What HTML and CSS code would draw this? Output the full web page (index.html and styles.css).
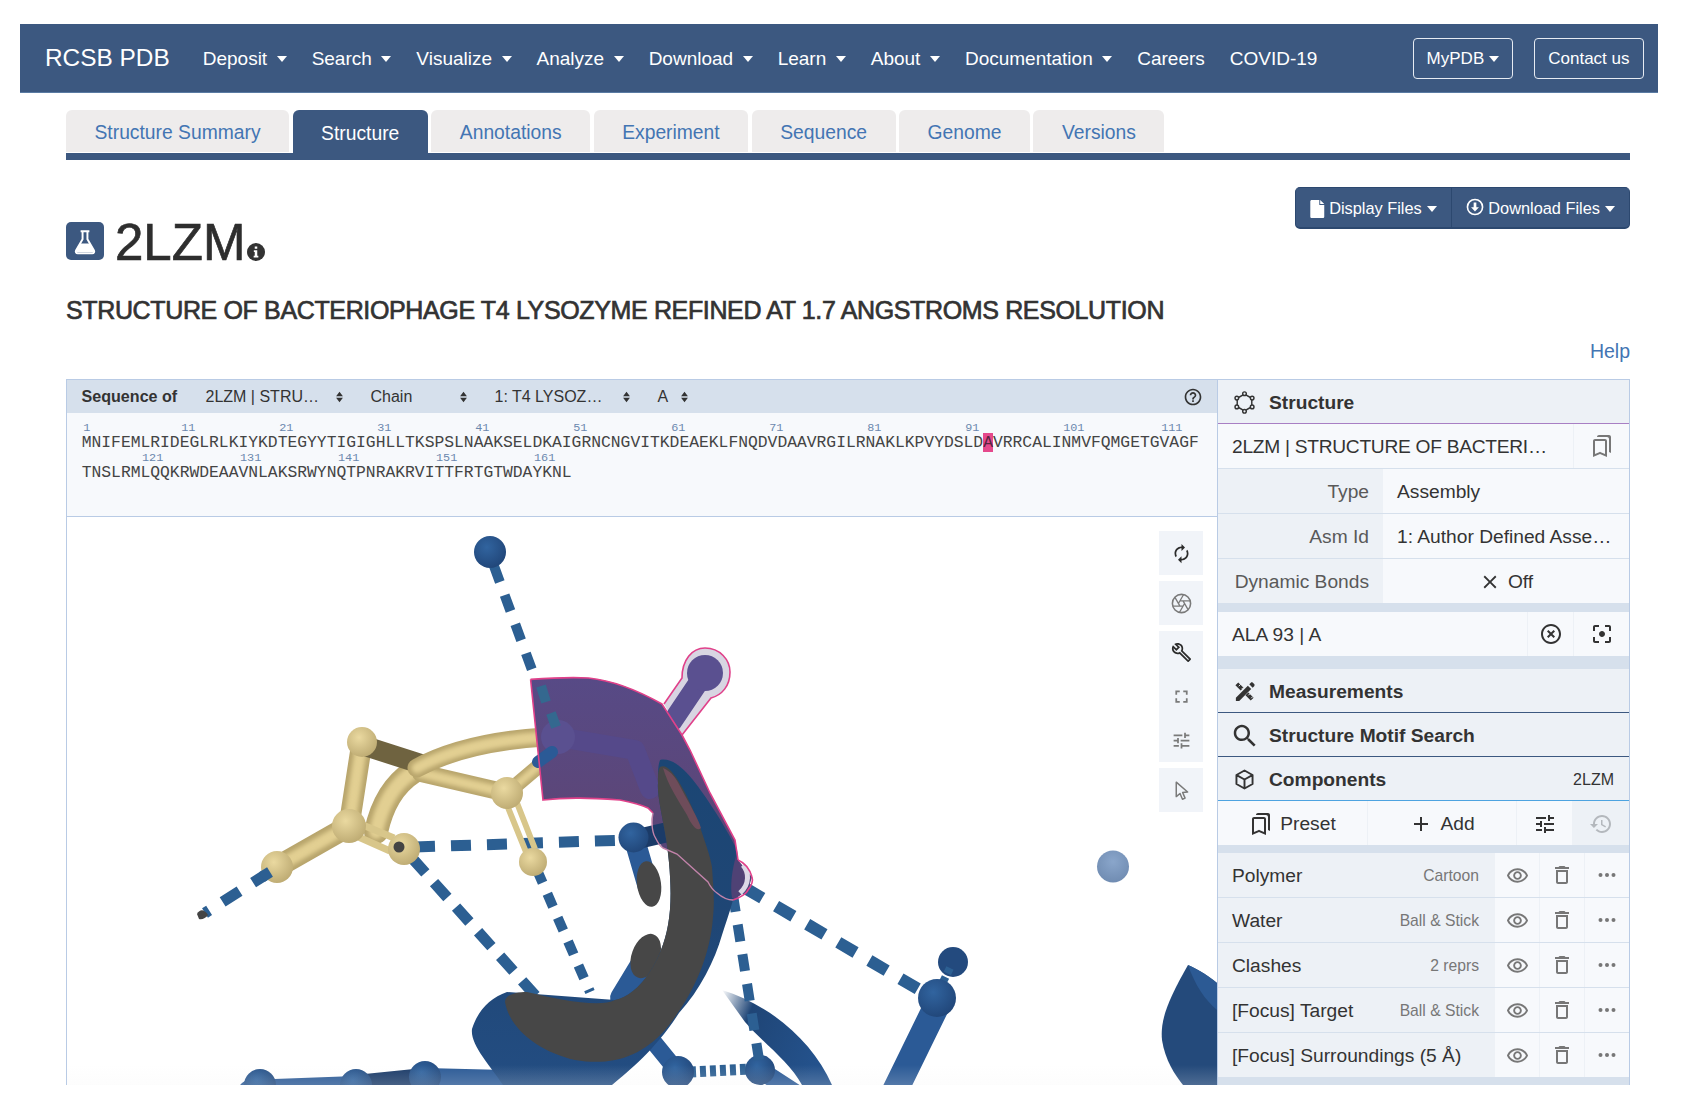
FILE: index.html
```html
<!DOCTYPE html>
<html lang="en">
<head>
<meta charset="utf-8">
<title>RCSB PDB - 2LZM: Structure</title>
<link rel="stylesheet" href="styles.css">
</head>
<body>
<svg class="sprite" aria-hidden="true">
  <symbol id="i-search" viewBox="0 0 24 24"><path d="M15.5 14h-.79l-.28-.27C15.41 12.59 16 11.11 16 9.5 16 5.91 13.09 3 9.5 3S3 5.91 3 9.5 5.91 16 9.5 16c1.61 0 3.09-.59 4.23-1.57l.27.28v.79l5 4.99L20.49 19l-4.99-5zm-6 0C7.01 14 5 11.99 5 9.5S7.01 5 9.5 5 14 7.01 14 9.5 11.99 14 9.5 14z"/></symbol>
  <symbol id="i-renew" viewBox="0 0 24 24"><path d="M12 6v3l4-4-4-4v3c-4.42 0-8 3.58-8 8 0 1.57.46 3.03 1.24 4.26L6.7 14.8c-.45-.83-.7-1.79-.7-2.8 0-3.31 2.69-6 6-6zm6.76 1.74L17.3 9.2c.44.84.7 1.79.7 2.8 0 3.31-2.69 6-6 6v-3l-4 4 4 4v-3c4.42 0 8-3.58 8-8 0-1.57-.46-3.03-1.24-4.26z"/></symbol>
  <symbol id="i-tune" viewBox="0 0 24 24"><path d="M3 17v2h6v-2H3zM3 5v2h10V5H3zm10 16v-2h8v-2h-8v-2h-2v6h2zM7 9v2H3v2h4v2h2V9H7zm14 4v-2H11v2h10zm-6-4h2V7h4V5h-4V3h-2v6z"/></symbol>
  <symbol id="i-eye" viewBox="0 0 24 24"><path d="M12 6.5c3.79 0 7.17 2.13 8.82 5.5-1.65 3.37-5.02 5.5-8.82 5.5S4.83 15.37 3.18 12C4.83 8.63 8.21 6.5 12 6.5m0-2C7 4.5 2.73 7.61 1 12c1.73 4.39 6 7.5 11 7.5s9.27-3.11 11-7.5c-1.73-4.39-6-7.5-11-7.5zm0 5c1.38 0 2.5 1.12 2.5 2.5s-1.12 2.5-2.5 2.5-2.5-1.12-2.5-2.5 1.12-2.5 2.5-2.5m0-2c-2.48 0-4.5 2.02-4.5 4.5s2.02 4.5 4.5 4.5 4.5-2.02 4.5-4.5-2.02-4.5-4.5-4.5z"/></symbol>
  <symbol id="i-trash" viewBox="0 0 24 24"><path d="M6 19c0 1.1.9 2 2 2h8c1.1 0 2-.9 2-2V7H6v12zM8 9h8v10H8V9zm7.5-5l-1-1h-5l-1 1H5v2h14V4z"/></symbol>
  <symbol id="i-more" viewBox="0 0 24 24"><circle cx="5.5" cy="12" r="2"/><circle cx="12" cy="12" r="2"/><circle cx="18.5" cy="12" r="2"/></symbol>
  <symbol id="i-history" viewBox="0 0 24 24"><path d="M13 3c-4.97 0-9 4.03-9 9H1l3.89 3.89.07.14L9 12H6c0-3.87 3.13-7 7-7s7 3.13 7 7-3.13 7-7 7c-1.93 0-3.68-.79-4.94-2.06l-1.42 1.42C8.27 19.99 10.51 21 13 21c4.97 0 9-4.03 9-9s-4.03-9-9-9zm-1 5v5l4.28 2.54.72-1.21-3.5-2.08V8H12z"/></symbol>
  <symbol id="i-help" viewBox="0 0 24 24"><path d="M11 18h2v-2h-2v2zm1-16C6.48 2 2 6.48 2 12s4.48 10 10 10 10-4.48 10-10S17.52 2 12 2zm0 18c-4.41 0-8-3.59-8-8s3.59-8 8-8 8 3.59 8 8-3.59 8-8 8zm0-14c-2.21 0-4 1.79-4 4h2c0-1.1.9-2 2-2s2 .9 2 2c0 2-3 1.75-3 5h2c0-2.25 3-2.5 3-5 0-2.21-1.79-4-4-4z"/></symbol>
  <symbol id="i-xcircle" viewBox="0 0 24 24"><path d="M14.59 8L12 10.59 9.41 8 8 9.41 10.59 12 8 14.59 9.41 16 12 13.41 14.59 16 16 14.59 13.41 12 16 9.41 14.59 8zM12 2C6.47 2 2 6.47 2 12s4.47 10 10 10 10-4.47 10-10S17.53 2 12 2zm0 18c-4.41 0-8-3.59-8-8s3.59-8 8-8 8 3.59 8 8-3.59 8-8 8z"/></symbol>
  <symbol id="i-focus" viewBox="0 0 24 24"><path d="M5 15H3v4c0 1.1.9 2 2 2h4v-2H5v-4zM5 5h4V3H5c-1.1 0-2 .9-2 2v4h2V5zm14-2h-4v2h4v4h2V5c0-1.1-.9-2-2-2zm0 16h-4v2h4c1.1 0 2-.9 2-2v-4h-2v4zM12 9c-1.66 0-3 1.34-3 3s1.34 3 3 3 3-1.34 3-3-1.34-3-3-3z"/></symbol>
  <symbol id="i-close" viewBox="0 0 24 24"><path d="M19 6.41L17.59 5 12 10.59 6.41 5 5 6.41 10.59 12 5 17.59 6.41 19 12 13.41 17.59 19 19 17.59 13.41 12z"/></symbol>
  <symbol id="i-add" viewBox="0 0 24 24"><path d="M19 13h-6v6h-2v-6H5v-2h6V5h2v6h6v2z"/></symbol>
  <symbol id="i-bookmarks" viewBox="0 0 24 24"><path d="M15 7v12.97l-4.21-1.81-.79-.34-.79.34L5 19.97V7h10m4-6H8.99C7.89 1 7 1.9 7 3h10c1.1 0 2 .9 2 2v13l2 1V3c0-1.1-.9-2-2-2zm-4 4H5c-1.1 0-2 .9-2 2v16l7-3 7 3V7c0-1.1-.9-2-2-2z"/></symbol>
  <symbol id="i-wrench" viewBox="0 0 24 24"><path d="M22.61 18.99l-9.08-9.08c.93-2.34.45-5.1-1.44-7C9.79.61 6.21.4 3.66 2.25L7.5 6.1 6.08 7.51 2.25 3.69C.4 6.23.61 9.82 2.91 12.11c1.86 1.86 4.57 2.35 6.89 1.48l9.11 9.11c.39.39 1.02.39 1.41 0l2.3-2.3c.4-.38.4-1.01-.01-1.41zm-3 1.6l-9.46-9.46c-.61.45-1.29.72-2 .82-1.36.2-2.79-.21-3.83-1.25C3.37 9.76 2.93 8.5 3 7.26l3.09 3.09 4.24-4.24-3.09-3.09c1.24-.07 2.49.37 3.44 1.31 1.08 1.08 1.49 2.57 1.24 3.96-.12.71-.42 1.37-.88 1.96l9.45 9.45-.88.88z"/></symbol>
  <symbol id="i-full" viewBox="0 0 24 24"><path d="M7 14H5v5h5v-2H7v-3zm-2-4h2V7h3V5H5v5zm12 7h-3v2h5v-5h-2v3zM14 5v2h3v3h2V5h-5z"/></symbol>
  <symbol id="i-shutter" viewBox="0 0 24 24"><g fill="none" stroke="currentColor"><circle cx="12" cy="12" r="10.4" stroke-width="1.8"/><path stroke-width="1.5" d="M15.5 12 9.75 21.96M13.75 15.03H2.25M10.25 15.03 4.5 5.07M8.5 12 14.25 2.04M10.25 8.97H21.75M13.75 8.97 19.5 18.93"/></g></symbol>
  <symbol id="i-cursor" viewBox="0 0 24 24"><path d="M6 2.5v16.5l4.3-3.6 2.8 6.6 3-1.3-2.8-6.5 5.7-.5z" fill="none" stroke="currentColor" stroke-width="1.7" stroke-linejoin="round"/></symbol>
  <symbol id="i-wand" viewBox="0 0 24 24"><path d="M2.5 5.5 5.5 2.5 11 8 8 11zM13 16 16 13 21.5 18.5 18.5 21.5z"/><path d="M6 6.5 8 4.5M9 9.5 10.5 8M16 16l1.5-1.5M19 19l1.5-1.5" stroke="#edf1f6" stroke-width="1"/><path d="M3 18.5 15.5 6 19 9.5 6.5 22H3zM17 4.5l1.6-1.6c.6-.6 1.5-.6 2.1 0l1.4 1.4c.6.6.6 1.5 0 2.1L20.5 8z"/></symbol>
  <symbol id="i-cube" viewBox="0 0 24 24"><path d="M12 2.6l8.4 4.7v9.4L12 21.4l-8.4-4.7V7.3zM3.8 7.4 12 12l8.2-4.6M12 12v9.2" fill="none" stroke="currentColor" stroke-width="2" stroke-linejoin="round"/></symbol>
  <symbol id="i-ring" viewBox="0 0 24 24"><g fill="none" stroke="currentColor" stroke-width="1.5"><path d="M12 3.2 19.6 7.6v8.8L12 20.8 4.4 16.4V7.6z"/><circle cx="12" cy="2.8" r="1.9" fill="#edf1f6"/><circle cx="20" cy="7.4" r="1.9" fill="#edf1f6"/><circle cx="20" cy="16.6" r="1.9" fill="#edf1f6"/><circle cx="12" cy="21.2" r="1.9" fill="#edf1f6"/><circle cx="4" cy="16.6" r="1.9" fill="#edf1f6"/><circle cx="4" cy="7.4" r="1.9" fill="#edf1f6"/></g></symbol>
  <symbol id="i-updown" viewBox="0 0 10 14"><path d="M5 1 9 6H1zM5 13 1 8h8z"/></symbol>
  <symbol id="i-file" viewBox="0 0 16 20"><path d="M1.5 0H10v5.5h5.5V18.5c0 .8-.7 1.5-1.5 1.5H1.5C.7 20 0 19.3 0 18.5V1.5C0 .7.7 0 1.5 0zM11 0l4.5 4.5H11z"/></symbol>
  <symbol id="i-dlcircle" viewBox="0 0 20 20"><g fill="none" stroke="currentColor"><circle cx="10" cy="10" r="8.4" stroke-width="1.8"/><path d="M10 5v7.5" stroke-width="3"/></g><path d="M5.6 10.2h8.8L10 15z"/></symbol>
  <symbol id="i-info" viewBox="0 0 20 20"><circle cx="10" cy="10" r="10"/><path fill="#fff" d="M8.6 3.8h2.8v2.6H8.6zM7.6 8.1h3.8v6.1h1.2v2H7.4v-2h1.2v-4.1h-1z"/></symbol>
  <symbol id="i-flask" viewBox="0 0 38 39"><path d="M14.5 9.5h9M16.5 9.5v8.2L9.8 29.2c-.7 1.4.2 3 1.7 3h15c1.5 0 2.4-1.6 1.7-3L21.5 17.7V9.5" fill="none" stroke="currentColor" stroke-width="2"/><path d="M14 22h10l4 7.6c.4.9-.2 1.8-1 1.8H11c-.9 0-1.5-.9-1-1.8z"/></symbol>
</svg>

<nav class="topnav">
  <a class="brand">RCSB PDB</a>
  <ul class="menu">
    <li class="menu-item">Deposit<i class="caret"></i></li>
    <li class="menu-item">Search<i class="caret"></i></li>
    <li class="menu-item">Visualize<i class="caret"></i></li>
    <li class="menu-item">Analyze<i class="caret"></i></li>
    <li class="menu-item">Download<i class="caret"></i></li>
    <li class="menu-item">Learn<i class="caret"></i></li>
    <li class="menu-item">About<i class="caret"></i></li>
    <li class="menu-item">Documentation<i class="caret"></i></li>
    <li class="menu-item">Careers</li>
    <li class="menu-item">COVID-19</li>
  </ul>
  <div class="nav-actions">
    <a class="nav-btn nav-btn-my">MyPDB<i class="caret caret-sm"></i></a>
    <a class="nav-btn nav-btn-contact">Contact us</a>
  </div>
</nav>

<main class="content">
  <div class="tabs">
    <a class="tab">Structure Summary</a>
    <a class="tab tab-active">Structure</a>
    <a class="tab">Annotations</a>
    <a class="tab">Experiment</a>
    <a class="tab">Sequence</a>
    <a class="tab">Genome</a>
    <a class="tab">Versions</a>
  </div>

  <div class="head">
    <div class="title">
      <svg class="flask"><use href="#i-flask"/></svg>
      <h1 class="pdb-id">2LZM</h1>
      <svg class="info"><use href="#i-info"/></svg>
    </div>
    <div class="file-btns">
      <a class="file-btn"><svg class="file-ico"><use href="#i-file"/></svg>Display Files<i class="caret caret-sm"></i></a>
      <a class="file-btn file-btn-dl"><svg class="dl-ico"><use href="#i-dlcircle"/></svg>Download Files<i class="caret caret-sm"></i></a>
    </div>
  </div>

  <h2 class="subtitle">STRUCTURE OF BACTERIOPHAGE T4 LYSOZYME REFINED AT 1.7 ANGSTROMS RESOLUTION</h2>
  <div class="help-row"><a class="help">Help</a></div>

  <section class="mol">
    <div class="mol-left">
      <div class="seq-head">
        <b class="seq-label">Sequence of</b>
        <span class="sel sel-1">2LZM | STRU…<svg class="updown"><use href="#i-updown"/></svg></span>
        <span class="sel sel-2">Chain<svg class="updown"><use href="#i-updown"/></svg></span>
        <span class="sel sel-3">1: T4 LYSOZ…<svg class="updown"><use href="#i-updown"/></svg></span>
        <span class="sel sel-4">A<svg class="updown"><use href="#i-updown"/></svg></span>
        <svg class="seq-help"><use href="#i-help"/></svg>
      </div>
      <div class="seq">
        <div class="nums"><span>1</span><span>11</span><span>21</span><span>31</span><span>41</span><span>51</span><span>61</span><span>71</span><span>81</span><span>91</span><span>101</span><span>111</span></div>
        <div class="res">MNIFEMLRIDEGLRLKIYKDTEGYYTIGIGHLLTKSPSLNAAKSELDKAIGRNCNGVITKDEAEKLFNQDVDAAVRGILRNAKLKPVYDSLD<span class="res-hit">A</span>VRRCALINMVFQMGETGVAGF</div>
        <div class="nums nums-2"><span>121</span><span>131</span><span>141</span><span>151</span><span>161</span></div>
        <div class="res">TNSLRMLQQKRWDEAAVNLAKSRWYNQTPNRAKRVITTFRTGTWDAYKNL</div>
      </div>
      <div class="canvas">
        <svg class="scene" viewBox="67 517 1150 568" width="1150" height="568">
          <defs>
            <radialGradient id="gBlue" cx="0.4" cy="0.35" r="0.75"><stop offset="0" stop-color="#31649f"/><stop offset="1" stop-color="#1f4375"/></radialGradient>
            <radialGradient id="gBeige" cx="0.4" cy="0.35" r="0.75"><stop offset="0" stop-color="#ead9a0"/><stop offset="1" stop-color="#b9a66e"/></radialGradient>
            <radialGradient id="gLone" cx="0.5" cy="0.35" r="0.75"><stop offset="0" stop-color="#8aa6cb"/><stop offset="1" stop-color="#6c88ae"/></radialGradient>
            <linearGradient id="gFade" x1="0" y1="0" x2="1" y2="0.35"><stop offset="0" stop-color="#ffffff"/><stop offset="0.3" stop-color="#1f4576"/><stop offset="1" stop-color="#24528c"/></linearGradient>
            <linearGradient id="gFloor" x1="0" y1="0" x2="0" y2="1"><stop offset="0" stop-color="#f3f3f3" stop-opacity="0"/><stop offset="1" stop-color="#f3f3f3" stop-opacity="0.2"/></linearGradient>
            <linearGradient id="gSheet" x1="0" y1="0" x2="0" y2="1"><stop offset="0" stop-color="#574a86"/><stop offset="0.6" stop-color="#5c4678"/><stop offset="1" stop-color="#4f4275"/></linearGradient>
            <linearGradient id="gRibbon" x1="0" y1="0" x2="0" y2="1"><stop offset="0" stop-color="#1b4674"/><stop offset="0.5" stop-color="#1f4675"/><stop offset="1" stop-color="#234d82"/></linearGradient>
          </defs>

          <!-- far lower-right scene -->
          <path class="blue-deep" d="M1188 965C1168 1000 1160 1020 1162 1040 1165 1060 1175 1075 1183 1085H1217V983C1205 973 1195 968 1188 965Z"/>
          <path class="blue-light" d="M1188 965C1195 985 1205 1000 1217 1010V983C1205 973 1195 968 1188 965Z"/>
          <circle cx="1113" cy="866.5" r="16" fill="url(#gLone)"/>
          <path class="stick stick-mid" d="M937 1005 893 1095" stroke-width="26"/>
          <circle cx="953" cy="962" r="15" fill="#234a7e"/>
          <path class="dash dash-fine" d="M950 968 938 992" stroke-width="8"/>
          <circle cx="937" cy="998" r="19" fill="url(#gBlue)"/>
          <path class="dash dash-long" d="M745 888 925 993" stroke-width="12"/>

          <!-- lower sticks -->
          <path class="stick stick-mid" d="M250 1092 356 1088" stroke-width="24"/>
          <path class="stick stick-dark" d="M356 1087 425 1080" stroke-width="24"/>
          <path class="stick stick-mid" d="M425 1080 505 1082" stroke-width="24"/>
          <circle cx="260" cy="1085" r="16" fill="url(#gBlue)"/>
          <circle cx="356" cy="1085" r="16" fill="url(#gBlue)"/>
          <circle cx="425" cy="1077" r="16" fill="url(#gBlue)"/>
          <path d="M722 990C770 1005 812 1040 832 1085H802C790 1062 762 1042 745 1022Z" fill="url(#gFade)"/>
          <path class="stick stick-mid" d="M652 1040 678 1072" stroke-width="17"/>
          <path class="dash dash-fine" d="M690 1072 752 1069" stroke-width="11"/>
          <circle cx="678" cy="1072" r="16" fill="url(#gBlue)"/>
          <path class="stick stick-mid" d="M760 1070 800 1096" stroke-width="18"/>
          <circle cx="760" cy="1070" r="15" fill="url(#gBlue)"/>
          <path class="dash dash-mid" d="M733 895 760 1066" stroke-width="10"/>

          <!-- dashed hydrogen bonds -->
          <path class="dash dash-top" d="M494 566 532 670" stroke-width="10"/>
          <path class="dash dash-long" d="M270 872 205 913" stroke-width="11"/>
          <path class="dash dash-long" d="M415 847 628 840" stroke-width="11"/>
          <path class="dash dash-diag" d="M412 858 542 1003" stroke-width="11"/>
          <path class="dash dash-short" d="M537 870 590 992" stroke-width="10"/>
          <path class="dark-tip" d="M197 914C200 909 204 909 208 915 206 918 202 920 199 919Z"/>
          <circle cx="490" cy="552" r="16" fill="url(#gBlue)"/>

          <!-- beige ligand -->
          <path class="tube" d="M413 772Q385 790 376 832" stroke-width="24"/>
          <path class="tube-hi" d="M413 772Q385 790 376 832" stroke-width="14"/>
          <path class="tube" d="M421 773 507 793" stroke-width="18"/>
          <path class="tube-hi" d="M421 773 507 793" stroke-width="10"/>
          <path class="tube" d="M362 742 349 826" stroke-width="21"/>
          <path class="tube-hi" d="M362 742 349 826" stroke-width="12"/>
          <path class="tube" d="M349 826 277 867" stroke-width="22"/>
          <path class="tube-hi" d="M349 826 277 867" stroke-width="12"/>
          <path class="tube tube-shade" d="M368 747 421 764" stroke-width="20"/>
          <path class="tube" d="M417 768Q465 742 545 737" stroke-width="19"/>
          <path class="tube-hi" d="M417 768Q465 742 545 737" stroke-width="11"/>
          <path class="tube" d="M507 793 540 765" stroke-width="15"/>
          <path class="tube-hi" d="M507 793 540 765" stroke-width="8"/>
          <path class="tube-thin" d="M358 823 394 838M354 835 390 851" stroke-width="7"/>
          <path class="tube-thin" d="M507 805 526 852M517 803 535 849" stroke-width="6"/>
          <circle cx="362" cy="742" r="15" fill="url(#gBeige)"/>
          <circle cx="349" cy="826" r="17" fill="url(#gBeige)"/>
          <circle cx="277" cy="867" r="16" fill="url(#gBeige)"/>
          <path class="dash dash-long" d="M270 872 262 877" stroke-width="11"/>
          <circle cx="507" cy="793" r="16" fill="url(#gBeige)"/>
          <circle cx="404" cy="849" r="16" fill="url(#gBeige)"/>
          <circle cx="399" cy="847" r="5.5" class="dark-tip"/>
          <circle cx="533" cy="862" r="14" fill="url(#gBeige)"/>

          <!-- highlighted residue sheet -->
          <path class="purple-halo" d="M664 704 682 678C682 660 692 648 705 648 720 648 730 660 730 672 730 686 722 695 711 698L682 735Z"/>
          <path class="purple-stick" d="M672 722 705 673" stroke-width="20"/>
          <circle cx="705" cy="673" r="18" class="purple-ball"/>
          <path fill="url(#gSheet)" d="M530.6 679.4C550 678 570 677 588.6 678 608 680 630 686 662 704L682 735 690 750 710 793 735 840 738 860 752 877 748 890 733 900 717 893 708 882 677 854 663 848 655 837 652 823 653 813 648 808C640 804 630 802 620 800 590 798 568 797 543 800Z"/>
          <path class="purple-stick purple-stick-in" d="M558 737 635 750 650 789" stroke-width="20"/>
          <circle cx="558" cy="737" r="17" class="purple-ball"/>
          <path class="dash-on" d="M541 686 546 702M551 713 556 727" stroke-width="10"/>
          <path class="stick stick-mid" d="M538 762 552 752" stroke-width="12"/>

          <!-- stick behind ribbon -->
          <path class="stick stick-mid" d="M634 838 648 886" stroke-width="21"/>
          <path class="stick stick-dark" d="M642 838 668 832" stroke-width="20"/>
          <circle cx="633.5" cy="837.5" r="15" fill="url(#gBlue)"/>
          <ellipse cx="649" cy="884" rx="12" ry="23" transform="rotate(-8 649 884)" class="grey"/>
          <path class="stick stick-mid" d="M641 965 621 998" stroke-width="22"/>
          <ellipse cx="645.7" cy="956" rx="14" ry="23" transform="rotate(20 645.7 956)" class="grey"/>

          <!-- ribbon -->
          <path fill="url(#gRibbon)" d="M660 760C672 757 685 770 693 780 705 795 725 825 737 850 742 880 730 910 722 935 715 960 700 990 679 1013 655 1050 630 1070 612 1085H503C490 1065 470 1045 472 1029 478 1010 490 998 507 992L615 1000C640 995 662 960 668 925 673 900 670 860 665 833 662 815 657 795 658 783 658 772 658 765 660 760Z"/>
          <path class="grey" d="M660 767C664 765 668 768 670 770 680 780 692 805 700 827 705 842 710 855 712 867 713 885 715 900 713 917 710 960 690 1000 665 1030 640 1058 610 1066 575 1060 540 1052 510 1030 505 1002 505 995 515 992 527 992 560 1000 600 1008 615 1000 640 995 662 960 668 925 673 900 670 860 665 833 662 815 657 795 658 783 658 775 658 770 660 767Z"/>
          <path class="grey-tint" d="M663 768C672 772 676 778 682 790 690 805 698 818 701 828 697 832 692 826 687 815 678 800 668 785 663 768Z"/>
          <path class="purple-over" d="M736 856C740 866 746 880 744 890 741 896 736 898 732 898 730 885 732 870 736 856Z"/>

          <!-- sheet outline -->
          <path class="purple-line" d="M530.6 679.4C550 678 570 677 588.6 678 608 680 630 686 662 704L682 735 690 750 710 793 735 840 738 860"/>
          <path class="purple-line" d="M653 813 648 808C640 804 630 802 620 800 590 798 568 797 543 800L530.6 679.4"/>
          <path class="purple-line" d="M664 704 682 678C682 660 692 648 705 648 720 648 730 660 730 672 730 686 722 695 711 698L682 735"/>
          <path class="halo-arc" d="M743 865C749 872 750 884 740 893"/>
          <path class="purple-line" d="M733 900C740 898 747 893 748 890 752 885 753 880 752 877 750 870 745 863 738 860"/>
          <path class="purple-soft" d="M653 813C651 820 652 832 655 837 658 843 660 847 663 848L677 854 708 882C711 888 714 891 717 893 724 899 728 900 733 900"/>
          <rect x="67" y="1065" width="1150" height="20" fill="url(#gFloor)"/>
        </svg>
        <div class="tools">
          <a class="tool"><svg class="tool-ico tool-dark"><use href="#i-renew"/></svg></a>
          <a class="tool"><svg class="tool-ico"><use href="#i-shutter"/></svg></a>
          <div class="tool-group">
            <a class="tool"><svg class="tool-ico tool-dark"><use href="#i-wrench"/></svg></a>
            <a class="tool"><svg class="tool-ico"><use href="#i-full"/></svg></a>
            <a class="tool"><svg class="tool-ico"><use href="#i-tune"/></svg></a>
          </div>
          <a class="tool"><svg class="tool-ico"><use href="#i-cursor"/></svg></a>
        </div>
      </div>
    </div>

    <aside class="panel">
      <div class="sec sec-purple"><svg class="sec-ico"><use href="#i-ring"/></svg><b>Structure</b></div>
      <div class="row row-gap1">
        <span class="row-text row-tight">2LZM | STRUCTURE OF BACTERI…</span>
        <a class="sq"><svg class="ic ic-grey"><use href="#i-bookmarks"/></svg></a>
      </div>
      <div class="kv"><span class="k">Type</span><span class="v">Assembly</span></div>
      <div class="kv"><span class="k">Asm Id</span><span class="v">1: Author Defined Asse…</span></div>
      <div class="kv kv-last"><span class="k">Dynamic Bonds</span><span class="v v-center"><svg class="ic-x"><use href="#i-close"/></svg>Off</span></div>
      <div class="row row-gap2">
        <span class="row-text">ALA 93 | A</span>
        <a class="sq sq-narrow"><svg class="ic"><use href="#i-xcircle"/></svg></a>
        <a class="sq"><svg class="ic"><use href="#i-focus"/></svg></a>
      </div>
      <div class="sec sec-dark"><svg class="sec-ico"><use href="#i-wand"/></svg><b>Measurements</b></div>
      <div class="sec sec-dark"><svg class="sec-ico sec-ico-lg"><use href="#i-search"/></svg><b>Structure Motif Search</b></div>
      <div class="sec sec-blue"><svg class="sec-ico"><use href="#i-cube"/></svg><b>Components</b><span class="sec-tag">2LZM</span></div>
      <div class="actions">
        <a class="act act-preset"><svg class="ic"><use href="#i-bookmarks"/></svg>Preset</a>
        <a class="act act-add"><svg class="ic"><use href="#i-add"/></svg>Add</a>
        <a class="act act-tune"><svg class="ic"><use href="#i-tune"/></svg></a>
        <a class="act act-hist"><svg class="ic ic-pale"><use href="#i-history"/></svg></a>
      </div>
      <div class="comp"><span class="comp-main"><span>Polymer</span><small>Cartoon</small></span><a class="cb"><svg class="ic ic-eye"><use href="#i-eye"/></svg></a><a class="cb"><svg class="ic ic-grey"><use href="#i-trash"/></svg></a><a class="cb"><svg class="ic ic-grey"><use href="#i-more"/></svg></a></div>
      <div class="comp"><span class="comp-main"><span>Water</span><small>Ball &amp; Stick</small></span><a class="cb"><svg class="ic ic-eye"><use href="#i-eye"/></svg></a><a class="cb"><svg class="ic ic-grey"><use href="#i-trash"/></svg></a><a class="cb"><svg class="ic ic-grey"><use href="#i-more"/></svg></a></div>
      <div class="comp"><span class="comp-main"><span>Clashes</span><small>2 reprs</small></span><a class="cb"><svg class="ic ic-eye"><use href="#i-eye"/></svg></a><a class="cb"><svg class="ic ic-grey"><use href="#i-trash"/></svg></a><a class="cb"><svg class="ic ic-grey"><use href="#i-more"/></svg></a></div>
      <div class="comp"><span class="comp-main"><span>[Focus] Target</span><small>Ball &amp; Stick</small></span><a class="cb"><svg class="ic ic-eye"><use href="#i-eye"/></svg></a><a class="cb"><svg class="ic ic-grey"><use href="#i-trash"/></svg></a><a class="cb"><svg class="ic ic-grey"><use href="#i-more"/></svg></a></div>
      <div class="comp"><span class="comp-main"><span>[Focus] Surroundings (5 Å)</span></span><a class="cb"><svg class="ic ic-eye"><use href="#i-eye"/></svg></a><a class="cb"><svg class="ic ic-grey"><use href="#i-trash"/></svg></a><a class="cb"><svg class="ic ic-grey"><use href="#i-more"/></svg></a></div>
    </aside>
  </section>
</main>
</body>
</html>
```

FILE: styles.css
```css
* { box-sizing: border-box; }
html, body { margin: 0; padding: 0; background: #fff; }
body {
  font-family: "Liberation Sans", Arial, sans-serif;
  color: #333;
  padding: 24px 24px 0 20px;
  height: 1118px;
  overflow: hidden;
}
a { color: inherit; text-decoration: none; }
svg { fill: currentColor; }
.sprite { display: none; }

/* top navigation */
.topnav {
  display: flex;
  align-items: center;
  height: 69px;
  padding: 0 14px 0 25px;
  background: #3c5880;
  border-bottom: 1px solid #5a7ba3;
  color: #fff;
}
.brand { font-size: 24.4px; margin-right: 33px; }
.menu {
  display: flex;
  gap: 25px;
  list-style: none;
  margin: 0;
  padding: 1px 0 0;
  font-size: 19px;
}
.menu-item { display: flex; align-items: center; }
.caret {
  display: inline-block;
  width: 0;
  height: 0;
  margin-left: 9.5px;
  border-top: 6px solid currentColor;
  border-left: 5px solid transparent;
  border-right: 5px solid transparent;
}
.caret-sm { margin-left: 5px; }
.nav-actions { display: flex; gap: 21px; margin-left: auto; }
.nav-btn {
  display: flex;
  align-items: center;
  height: 41px;
  border: 1px solid #e6ebf2;
  border-radius: 4px;
  font-size: 17px;
  padding: 2px 13.5px 0;
}
.nav-btn-my { padding: 2px 12.5px 0; }

.content { margin: 0 28px 0 46px; }

/* tabs */
.tabs {
  display: flex;
  align-items: flex-start;
  gap: 3.5px;
  margin-top: 17px;
  height: 50px;
  border-bottom: 7px solid #3c5880;
}
.tab {
  display: flex;
  align-items: center;
  height: 42px;
  padding: 4px 28.5px 0;
  background: #eeecec;
  border-radius: 6px 6px 0 0;
  font-size: 19.3px;
  color: #4375b3;
}
.tab-active { height: 43px; background: #3c5880; color: #fff; }

/* heading */
.head {
  display: flex;
  justify-content: space-between;
  align-items: flex-start;
  padding-top: 27px;
}
.title { display: flex; align-items: flex-start; padding-top: 34px; }
.flask {
  width: 38px;
  height: 38px;
  margin: 1px 11px 0 0;
  border-radius: 5px;
  background: #3c5880;
  color: #fff;
}
.pdb-id {
  margin: 2px 2px 0 0;
  font-size: 51px;
  line-height: 40px;
  font-weight: 400;
  color: #2e2e2e;
  -webkit-text-stroke: .7px #2e2e2e;
}
.info { width: 18px; height: 18px; align-self: flex-end; margin-bottom: 2px; color: #333; }

.file-btns {
  display: flex;
  height: 42px;
  border: 1px solid #2c486f;
  border-bottom-width: 2px;
  border-radius: 5px;
  background: #3c5880;
  color: #fff;
  font-size: 16.35px;
}
.file-btn { display: flex; align-items: center; padding: 2px 14px 0 14.5px; }
.file-btn-dl { border-left: 1px solid #2c486f; }
.file-ico { width: 15px; height: 18px; margin-right: 4px; }
.dl-ico { width: 18px; height: 18px; margin-right: 4px; margin-top: -3px; }

.subtitle {
  margin: 33px 0 0;
  font-size: 25px;
  line-height: 28px;
  font-weight: 400;
  color: #333;
  letter-spacing: -.36px;
  -webkit-text-stroke: .7px #333;
  white-space: nowrap;
}
.help-row { display: flex; justify-content: flex-end; margin-top: 15px; }
.help { font-size: 19.5px; line-height: 24px; color: #4375b3; }

/* molecule viewer */
.mol {
  display: grid;
  grid-template-columns: 1150px 1fr;
  height: 706px;
  margin-top: 16px;
  border: 1px solid #b9cbe5;
  border-bottom: 0;
  overflow: hidden;
}
.mol-left { display: flex; flex-direction: column; min-width: 0; }
.seq-head {
  display: flex;
  align-items: center;
  height: 33px;
  padding-left: 14.5px;
  background: #d6e0ec;
  font-size: 16px;
}
.seq-label { width: 124px; font-size: 16.1px; }
.sel { display: flex; align-items: center; justify-content: space-between; padding-right: 27px; }
.sel-1 { width: 165px; }
.sel-2 { width: 124px; }
.sel-3 { width: 163px; }
.sel-4 { width: 58px; }
.updown { width: 9px; height: 12px; color: #333; }
.seq-help { width: 20px; height: 20px; margin-left: auto; margin-right: 14px; }

.seq {
  height: 104px;
  padding: 8px 0 0 14.7px;
  background: #f7f9fc;
  border-bottom: 1px solid #b9cbe5;
  font-family: "Liberation Mono", "Courier New", monospace;
}
.nums { display: flex; height: 14px; font-size: 11.8px; line-height: 14px; color: #6b88ae; }
.nums span { width: 98px; padding-left: 1.5px; flex: none; }
.nums-2 { padding-left: 58.8px; margin-top: 1px; }
.res { font-size: 16.33px; line-height: 15px; color: #444; white-space: nowrap; }
.res-hit { background: #e5498c; color: #5a2340; }

.canvas { position: relative; flex: 1; background: #fff; }
.scene { display: block; }
.tools {
  position: absolute;
  top: 14px;
  right: 14px;
  display: flex;
  flex-direction: column;
  gap: 6px;
  width: 44px;
  color: #7a7a7a;
}
.tool-group { display: flex; flex-direction: column; background: #f1f4f9; }
.tool {
  display: flex;
  align-items: center;
  justify-content: center;
  height: 44px;
  background: #f1f4f9;
}
.tool-group .tool { height: 43.7px; }
.tool-ico { width: 21px; height: 21px; }
.tool-dark { color: #2b2b2b; }

/* scene colouring */
.stick { fill: none; stroke-linecap: round; }
.stick-mid { stroke: #2b5a96; }
.stick-dark { stroke: #1b3b68; }
.blue-deep { fill: #244a7b; }
.blue-light { fill: #2c5a94; }
.dash { fill: none; stroke: #2c5f92; }
.dash-long { stroke-dasharray: 20 16; }
.dash-top { stroke-dasharray: 17 14; }
.dash-diag { stroke-dasharray: 20 13; }
.dash-short { stroke-dasharray: 14 12; }
.dash-mid { stroke-dasharray: 17 13; }
.dash-fine { stroke-dasharray: 6 4; }
.dash-on { fill: none; stroke: #34688f; }
.dark-tip { fill: #444; }
.tube { fill: none; stroke: #b8a56c; stroke-linecap: round; }
.tube-hi { fill: none; stroke: #e2cf92; stroke-linecap: round; filter: blur(2px); }
.tube-shade { stroke: #6f6340; }
.tube-thin { fill: none; stroke: #d8c68a; }
.purple-halo { fill: #d8d5e2; }
.purple-stick { fill: none; stroke: #5a5090; stroke-linecap: round; stroke-linejoin: round; }
.purple-stick-in { stroke: #55498a; }
.purple-ball { fill: #5a5090; }
.purple-over { fill: #4f4275; }
.grey { fill: #474747; }
.grey-tint { fill: #6e4c5a; }
.purple-line { fill: none; stroke: #e0418a; stroke-width: 1.6; }
.purple-soft { fill: none; stroke: #c283aa; stroke-width: 1.4; }
.halo-arc { fill: none; stroke: #dcd9e6; stroke-width: 5; }

/* side panel */
.panel {
  display: flex;
  flex-direction: column;
  background: #d6e0ec;
  border-left: 1px solid #b9cbe5;
  font-size: 19.2px;
  min-width: 0;
}
.sec {
  display: flex;
  align-items: center;
  flex: none;
  height: 44px;
  padding: 2px 15px 0;
  background: #edf1f6;
  border-bottom: 1px solid #3c5880;
  color: #333;
}
.sec b { font-size: 19.2px; }
.sec-purple { border-bottom-color: #a87fc4; }
.sec-blue { border-bottom-color: #4da3e0; }
.sec-ico { width: 23px; height: 23px; margin-right: 13px; flex: none; }
.sec-ico-lg { width: 30px; height: 30px; margin: 0 9px 0 -3px; }
.sec-tag { margin-left: auto; font-size: 16px; }

.row {
  display: flex;
  align-items: center;
  flex: none;
  height: 44px;
  background: #f7f9fc;
}
.row-gap1 { margin-bottom: 1px; }
.row-gap2 { margin-bottom: 13px; }
.row-text { flex: 1; padding: 1px 0 0 14px; white-space: nowrap; }
.row-tight { letter-spacing: -.28px; }
.sq {
  display: flex;
  align-items: center;
  justify-content: center;
  width: 56px;
  height: 44px;
  flex: none;
  border-left: 1px solid #edf1f6;
  color: #333;
}
.sq-narrow { width: 46px; }
.ic { width: 24px; height: 24px; }
.ic-grey { color: #777; }
.ic-pale { color: #b4b8bd; }
.ic-eye { width: 23px; height: 23px; color: #777; }
.ic-x { width: 22px; height: 22px; margin-right: 7px; }

.kv { display: grid; grid-template-columns: 165px 1fr; height: 44px; flex: none; margin-bottom: 1px; }
.kv-last { margin-bottom: 9px; }
.k { display: flex; align-items: center; justify-content: flex-end; padding: 1px 14px 0 0; background: #edf1f6; color: #595959; }
.v { display: flex; align-items: center; padding: 1px 0 0 14px; background: #f7f9fc; white-space: nowrap; }
.v-center { justify-content: center; padding-left: 0; }

.actions {
  display: grid;
  grid-template-columns: 149px 149px 56px 1fr;
  flex: none;
  height: 44px;
  margin-bottom: 8px;
  background: #f7f9fc;
}
.act { display: flex; align-items: center; justify-content: center; padding-top: 1px; border-left: 1px solid #edf1f6; color: #333; }
.act-preset { border-left: 0; }
.act .ic { margin-right: 7px; }
.act-tune .ic, .act-hist .ic { margin-right: 0; }
.act-hist { background: #edf1f6; }

.comp { display: flex; flex: none; height: 44px; margin-bottom: 1px; }
.comp-main {
  display: flex;
  align-items: center;
  justify-content: space-between;
  width: 276px;
  padding: 1px 15px 0 14px;
  background: #edf1f6;
  white-space: nowrap;
}
.comp-main small { font-size: 15.7px; color: #777; }
.cb {
  display: flex;
  align-items: center;
  justify-content: center;
  flex: 1;
  background: #f7f9fc;
  border-left: 1px solid #edf1f6;
}
```
